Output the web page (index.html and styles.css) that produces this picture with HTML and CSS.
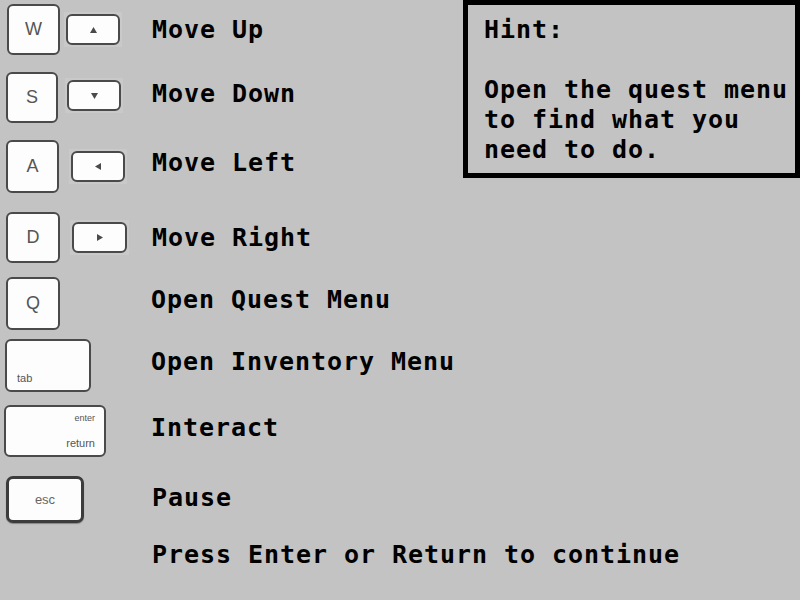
FILE: index.html
```html
<!DOCTYPE html>
<html lang="en">
<head>
<meta charset="utf-8">
<title>Controls</title>
<link rel="stylesheet" href="styles.css">
</head>
<body>
<div class="screen">
  <div class="controls">
    <div class="row">
      <div class="keys">
        <div class="key letter">W</div>
        <div class="pad gap6"><div class="key arrow"><svg width="7" height="6" viewBox="0 0 7 6"><path d="M3.5 0L7 6H0z"/></svg></div></div>
      </div>
      <div class="label">Move Up</div>
    </div>
    <div class="row">
      <div class="keys">
        <div class="key letter narrow">S</div>
        <div class="pad gap9 lift"><div class="key arrow"><svg width="7" height="6" viewBox="0 0 7 6"><path d="M0 0H7L3.5 6z"/></svg></div></div>
      </div>
      <div class="label up">Move Down</div>
    </div>
    <div class="row">
      <div class="keys">
        <div class="key letter tall">A</div>
        <div class="pad gap12"><div class="key arrow"><svg width="6" height="7" viewBox="0 0 6 7"><path d="M0 3.5L6 0V7z"/></svg></div></div>
      </div>
      <div class="label up">Move Left</div>
    </div>
    <div class="row">
      <div class="keys">
        <div class="key letter wide">D</div>
        <div class="pad gap12"><div class="key arrow wide"><svg width="6" height="7" viewBox="0 0 6 7"><path d="M0 0L6 3.5L0 7z"/></svg></div></div>
      </div>
      <div class="label">Move Right</div>
    </div>
    <div class="row">
      <div class="keys short">
        <div class="key letter wide tall">Q</div>
      </div>
      <div class="label up">Open Quest Menu</div>
    </div>
    <div class="row">
      <div class="keys short">
        <div class="key tab"><span>tab</span></div>
      </div>
      <div class="label up">Open Inventory Menu</div>
    </div>
    <div class="row">
      <div class="keys short">
        <div class="key enter"><span class="small">enter</span><span>return</span></div>
      </div>
      <div class="label up">Interact</div>
    </div>
    <div class="row">
      <div class="keys">
        <div class="key esc">esc</div>
      </div>
      <div class="label up-sm">Pause</div>
    </div>
    <div class="continue">Press Enter or Return to continue</div>
  </div>
  <aside class="hint">
    <p>Hint:</p>
    <p>Open the quest menu<br>to find what you<br>need to do.</p>
  </aside>
</div>
</body>
</html>
```

FILE: styles.css
```css
html, body {
  margin: 0;
  padding: 0;
  background: #c3c3c3;
}

body {
  width: 800px;
  height: 600px;
  overflow: hidden;
  font-family: "DejaVu Sans Mono", "Liberation Mono", monospace;
  font-weight: bold;
  font-size: 25px;
  letter-spacing: 0.95px;
  color: #000;
}

.screen {
  display: flex;
  align-items: flex-start;
  height: 600px;
}

.controls {
  width: 463px;
  display: grid;
  grid-template-rows: 68px 68px 72px 65px 62px 66px 71px 64px auto;
  padding-top: 4px;
}

.row {
  display: flex;
  align-items: center;
  align-self: start;
}

.keys {
  width: 146px;
  padding-left: 6px;
  display: flex;
  align-items: center;
  flex-shrink: 0;
}

.keys.short {
  width: 145px;
}

.label {
  line-height: 30px;
  white-space: nowrap;
}

.label.up {
  margin-bottom: 7px;
}

.label.up-sm {
  margin-bottom: 3px;
}

.continue {
  line-height: 30px;
  padding-left: 152px;
  white-space: nowrap;
}

.key {
  box-sizing: border-box;
  background: #fdfdfd;
  border: 2px solid #4a4a4a;
  border-radius: 6px;
  color: #555;
  font-family: "Liberation Sans", Arial, sans-serif;
  font-weight: normal;
  letter-spacing: 0;
}

.letter {
  width: 53px;
  height: 51px;
  margin-left: 1px;
  display: flex;
  align-items: center;
  justify-content: center;
  font-size: 18px;
}

.letter.narrow {
  width: 52px;
  margin-left: 0;
}

.letter.tall {
  height: 53px;
  margin-left: 0;
}

.letter.wide {
  width: 54px;
  margin-left: 0;
}

.pad {
  background: #c9c9c9;
  padding: 2px;
}

.gap6 { margin-left: 4px; }
.gap9 { margin-left: 7px; }
.gap12 { margin-left: 10px; }
.lift { margin-bottom: 4px; }

.arrow {
  width: 54px;
  height: 31px;
  display: flex;
  align-items: center;
  justify-content: center;
}

.arrow.wide {
  width: 55px;
}

.arrow svg {
  fill: #4a4a4a;
  display: block;
}

.tab {
  width: 86px;
  height: 53px;
  margin-left: -1px;
  display: flex;
  align-items: flex-end;
  padding: 0 0 6px 10px;
  font-size: 11px;
  line-height: 12px;
}

.enter {
  width: 102px;
  height: 52px;
  margin-left: -2px;
  display: flex;
  flex-direction: column;
  align-items: flex-end;
  justify-content: space-between;
  padding: 6px 9px 5px 0;
  font-size: 11px;
  line-height: 13px;
}

.enter .small {
  font-size: 9px;
  line-height: 11px;
}

.esc {
  width: 78px;
  height: 47px;
  border: 3px solid #3c3c3c;
  border-radius: 7px;
  display: flex;
  align-items: center;
  justify-content: center;
  font-size: 13px;
  color: #666;
  box-shadow: 0 1px 1px #888;
}

.hint {
  box-sizing: border-box;
  width: 337px;
  height: 178px;
  border: 5px solid #000;
  padding: 10px 0 0 16px;
  line-height: 30px;
}

.hint p {
  margin: 0 0 30px 0;
  white-space: nowrap;
}
```
